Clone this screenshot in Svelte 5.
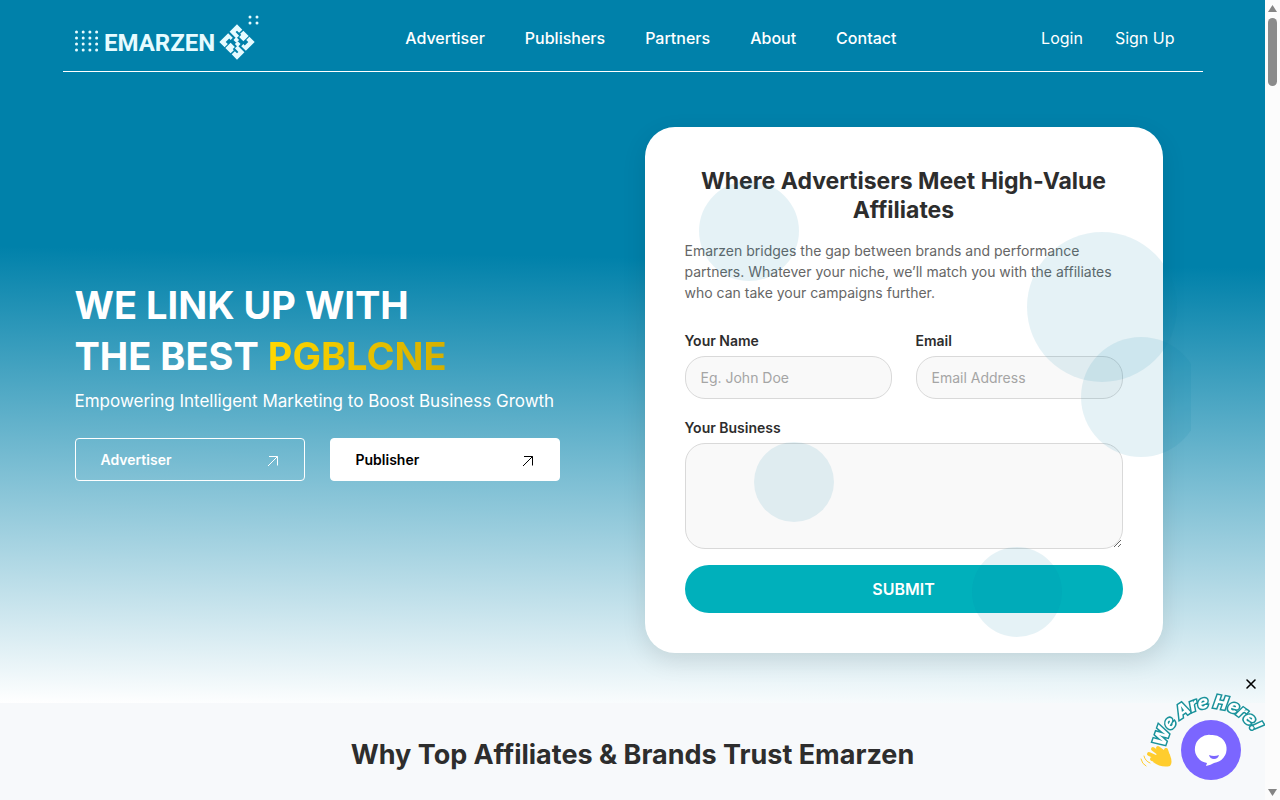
<svelte:options runes={true} />

<script>
const links = ['Advertiser', 'Publishers', 'Partners', 'About', 'Contact'];
const circles = ['one', 'two', 'three', 'four', 'five'];
const grid = [0, 1, 2, 3];
let name = $state('');
let email = $state('');
let business = $state('');
let chatOpen = $state(true);
function submit(event) {
    event.preventDefault();
}
</script>

{#snippet arrow()}
    <svg class="arrow" width="12" height="12" viewBox="0 0 12 12" fill="none" stroke="currentColor">
        <path d="M1 11L10.5 1.5M2 1.5H10.5V10.5" />
    </svg>
{/snippet}

<div class="page">
    <div class="hero">
        <header class="container">
            <a class="logo" href="#home">
                <svg width="190" height="50" viewBox="0 0 190 50" fill="#e6fbff" role="img" aria-label="Emarzen">
                    {#each grid as row}
                        {#each grid as col}
                            <circle cx={1.5 + col * 6.7} cy={21 + row * 6} r="1.5" />
                        {/each}
                    {/each}
                    <text class="wordmark" x="29" y="40">EMARZEN</text>
                    <g transform="translate(162 31) rotate(45)">
                        <path d="M-12.5 -12.5H-5V-8H-8V-6H-3V-3H0V1H-4V-2H-12.500ZM-12.5 0H-6V3H-8V8H-5V12.5H-12.5Z" />
                        <path transform="rotate(180)" d="M-12.5 -12.5H-5V-8H-8V-6H-3V-3H0V1H-4V-2H-12.5ZM-12.5 0H-6V3H-8V8H-5V12.5H-12.5Z" />
                        <path d="M-3.5 -12.5H4V-5H-2V-8H-3.5ZM3.5 12.5H-4V5H2V8H3.5Z" />
                    </g>
                    <circle cx="175" cy="6" r="1.5" />
                    <circle cx="182" cy="6" r="1.5" />
                    <circle cx="175" cy="12" r="1.5" />
                    <circle cx="182" cy="12" r="1.5" />
                </svg>
            </a>
            <nav class="menu">
                {#each links as link}
                    <a href="#{link.toLowerCase()}">{link}</a>
                {/each}
            </nav>
            <nav class="account">
                <a href="#login">Login</a>
                <a href="#signup">Sign Up</a>
            </nav>
        </header>

        <div class="container banner">
            <div class="intro">
                <h1>WE LINK UP WITH<br />THE BEST <span>PGBLCNE</span></h1>
                <p>Empowering Intelligent Marketing to Boost Business Growth</p>
                <div class="actions">
                    <a class="action" href="#advertiser">Advertiser {@render arrow()}</a>
                    <a class="action solid" href="#publisher">Publisher {@render arrow()}</a>
                </div>
            </div>

            <div class="contact">
                <form class="card" onsubmit={submit}>
                    <h2>Where Advertisers Meet High-Value Affiliates</h2>
                    <p>Emarzen bridges the gap between brands and performance partners. Whatever your niche, we’ll match you with the affiliates who can take your campaigns further.</p>
                    <div class="fields">
                        <div class="field">
                            <label for="name">Your Name</label>
                            <input id="name" type="text" placeholder="Eg. John Doe" bind:value={name} />
                        </div>
                        <div class="field">
                            <label for="email">Email</label>
                            <input id="email" type="email" placeholder="Email Address" bind:value={email} />
                        </div>
                    </div>
                    <div class="field">
                        <label for="business">Your Business</label>
                        <textarea id="business" bind:value={business}></textarea>
                    </div>
                    <button class="submit" type="submit">SUBMIT</button>
                </form>
                <div class="circles">
                    {#each circles as circle}
                        <span class={circle}></span>
                    {/each}
                </div>
            </div>
        </div>
    </div>

    <section class="trust">
        <h2>Why Top Affiliates &amp; Brands Trust Emarzen</h2>
    </section>
</div>

{#if chatOpen}
<div class="chat">
    <button class="close" aria-label="Close" onclick={() => chatOpen = false}>
        <svg width="10" height="10" viewBox="0 0 10 10" stroke="#000" stroke-width="1.6" stroke-linecap="round">
            <path d="M1 1L9 9M9 1L1 9" />
        </svg>
    </button>
    <button class="bubble" aria-label="Open chat">
        <svg width="126" height="110" viewBox="0 0 126 110">
            <defs>
                <path id="arc" d="M25 58A47 47 0 0 1 118 58" />
            </defs>
            <text class="here"><textPath href="#arc">We Are Here!</textPath></text>
            <circle cx="71" cy="60" r="30" fill="#7b66ff" />
            <path fill="#fff" d="M71 45a14 14 0 0 1 3 28q-3 2-8 3l1-3a14 14 0 0 1 4-28z" />
            <path fill="#7b66ff" d="M69 65q5 2 10 0q-1 4-5 4t-5-4z" />
            <g fill="none" stroke="#ffcd2e" stroke-linecap="round">
                <path stroke-width="4" d="M13 59L21 65M9 64L18 68M12 69L19 71M18 58L26 64M26 60L28 66" />
                <path d="M1 69q1 5 5 7M4 66q1 5 6 7" />
            </g>
            <path fill="#ffcd2e" d="M18 61l9 0 3 4q3 8 0 11-9 2-17-4z" />
        </svg>
    </button>
</div>
{/if}

<div class="scrollbar">
    <svg width="9" height="7" viewBox="0 0 9 7" fill="#858585"><path d="M4.5 0L9 7H0z" /></svg>
    <span></span>
    <svg width="9" height="7" viewBox="0 0 9 7" fill="#858585"><path d="M4.5 7L9 0H0z" /></svg>
</div>

<style>
:global(body) {
    margin: 0;
    overflow-x: hidden;
}
* {
    box-sizing: border-box;
}
.page {
    margin-right: 15px;
    font-family: Inter, "Liberation Sans", sans-serif;
    color: #2d2d2d;
}
.page a {
    color: #fff;
    text-decoration: none;
}
.hero {
    padding-bottom: 50px;
    background: linear-gradient(181deg, #0081aa 37%, #fff 100%);
}
.container {
    max-width: 1140px;
    margin: 0 auto;
    padding: 0 12px;
}
header {
    display: flex;
    align-items: center;
    height: 72px;
    border-bottom: 1px solid #fff;
}
.logo svg {
    display: block;
    overflow: visible;
}
.wordmark {
    font: 700 24px Roboto, sans-serif;
}
.menu {
    display: flex;
    flex: 1;
    justify-content: center;
    gap: 40px;
    padding: 5px 4px 0 0;
    font-size: 16px;
    font-weight: 500;
}
.account {
    display: flex;
    gap: 32px;
    padding: 5px 16px 0 0;
    font-size: 16px;
}
.banner {
    display: grid;
    grid-template-columns: 1fr 1fr;
    gap: 24px;
    align-items: center;
    padding-top: 55px;
}
.intro {
    padding-bottom: 20px;
}
.intro h1 {
    margin: 0;
    color: #fff;
    font-size: 38px;
    line-height: 51px;
}
.intro h1 span {
    background: linear-gradient(90deg, #ffd700, #d4af00);
    background-clip: text;
    color: transparent;
}
.intro p {
    margin: 6px 0 24px;
    color: #fff;
    font-size: 17px;
    line-height: 26px;
}
.actions {
    display: flex;
    gap: 25px;
}
.action {
    display: flex;
    align-items: center;
    justify-content: space-between;
    width: 230px;
    height: 43px;
    padding: 0 25px;
    border: 1px solid #fff;
    border-radius: 4px;
    font-size: 14px;
    font-weight: 600;
}
.page .solid {
    background: #fff;
    color: #000;
}
.arrow {
    margin-top: 4px;
}
.contact {
    position: relative;
}
.card {
    max-width: 518px;
    padding: 40px;
    border-radius: 30px;
    background: #fff;
    box-shadow: 0 8px 24px rgba(0, 0, 0, 0.1);
}
.card h2 {
    margin: 0 0 15px;
    font-size: 23px;
    line-height: 29px;
    text-align: center;
}
.card p {
    margin: 0 0 27px;
    color: #666;
    font-size: 14px;
    line-height: 21px;
}
.fields {
    display: grid;
    grid-template-columns: 1fr 1fr;
    gap: 24px;
    margin-bottom: 18px;
}
.field {
    display: flex;
    flex-direction: column;
    gap: 5px;
}
.field label {
    font-size: 14px;
    font-weight: 600;
    line-height: 21px;
}
.field input,
.field textarea {
    width: 100%;
    height: 43px;
    padding: 0 15px;
    border: 1px solid #d9d9d9;
    border-radius: 20px;
    background: #f9f9f9;
    font: 14px Inter, sans-serif;
}
.field textarea {
    height: 106px;
    padding: 12px 15px;
}
.field input::placeholder {
    color: #a5a5a5;
}
.submit {
    width: 100%;
    height: 48px;
    margin-top: 16px;
    border: 0;
    border-radius: 24px;
    background: #00b0bb;
    color: #fff;
    font: 600 16px Inter, sans-serif;
}
.circles {
    position: absolute;
    inset: 0;
    overflow: hidden;
    pointer-events: none;
}
.circles span {
    position: absolute;
    border-radius: 50%;
    background: rgba(0, 129, 170, 0.1);
}
.circles .one {
    top: 54px;
    left: 54px;
    width: 100px;
    height: 100px;
}
.circles .two {
    top: 105px;
    left: 382px;
    width: 150px;
    height: 150px;
}
.circles .three {
    top: 210px;
    left: 436px;
    width: 120px;
    height: 120px;
}
.circles .four {
    top: 315px;
    left: 109px;
    width: 80px;
    height: 80px;
}
.circles .five {
    top: 420px;
    left: 327px;
    width: 90px;
    height: 90px;
}
.trust {
    padding: 35px 12px;
    background: #f7f9fb;
    text-align: center;
}
.trust h2 {
    margin: 0;
    font-size: 27px;
    line-height: 34px;
}
.chat {
    position: fixed;
    right: 14px;
    bottom: -4px;
}
.chat button {
    padding: 0;
    border: 0;
    background: none;
}
.chat svg {
    display: block;
    overflow: visible;
}
.close {
    position: absolute;
    top: -11px;
    right: 10px;
}
.here {
    fill: #fff;
    stroke: #1a929b;
    stroke-width: 3px;
    paint-order: stroke;
    font: italic 800 18px Inter, sans-serif;
}
.scrollbar {
    position: fixed;
    top: 0;
    right: 0;
    bottom: 0;
    display: flex;
    flex-direction: column;
    align-items: center;
    width: 15px;
    padding: 5px 0 4px;
    background: #fcfcfc;
}
.scrollbar span {
    width: 9px;
    height: 68px;
    margin: 6px 0 auto;
    border-radius: 5px;
    background: #8b8b8b;
}
</style>
